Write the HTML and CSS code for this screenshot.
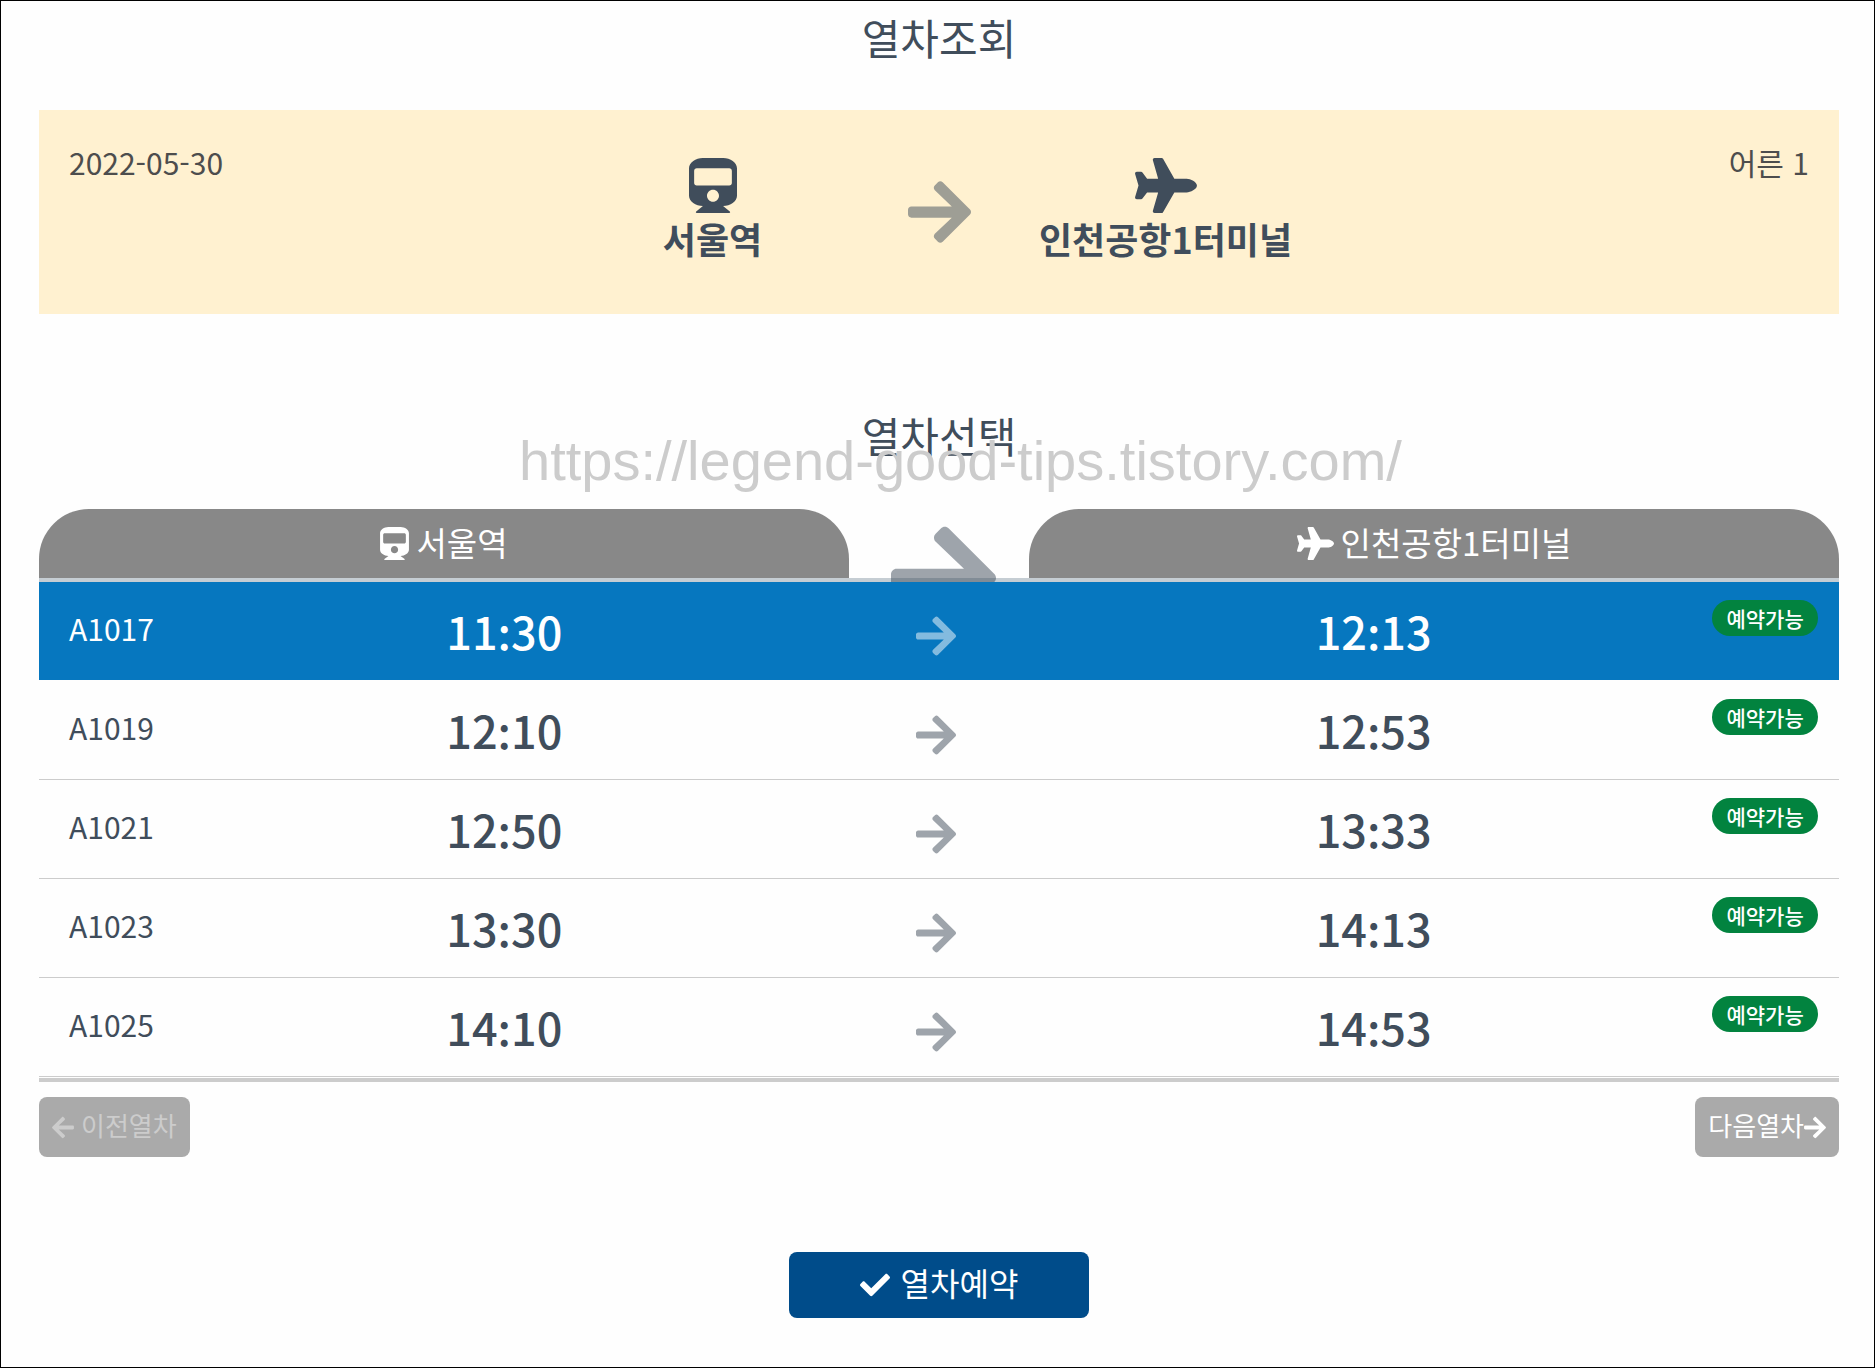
FILE: index.html
```html
<!DOCTYPE html>
<html lang="ko">
<head>
<meta charset="utf-8">
<meta name="viewport" content="width=device-width, initial-scale=1">
<title>열차조회</title>
<link rel="stylesheet" href="styles.css">
</head>
<body>
<svg class="sprite" aria-hidden="true">
  <symbol id="train" viewBox="0 0 448 512"><path d="M448 96v256c0 51.815-61.624 96-130.022 96l62.98 49.721C386.905 502.417 383.562 512 376 512H72c-7.578 0-10.892-9.594-4.957-14.279L130.022 448C61.82 448 0 403.954 0 352V96C0 42.981 64 0 128 0h192c65 0 128 42.981 128 96zm-48 136V120c0-13.255-10.745-24-24-24H72c-13.255 0-24 10.745-24 24v112c0 13.255 10.745 24 24 24h304c13.255 0 24-10.745 24-24zm-176 64c-30.928 0-56 25.072-56 56s25.072 56 56 56 56-25.072 56-56-25.072-56-56-56z"/></symbol>
  <symbol id="plane" viewBox="0 0 576 512"><path d="M480 192H365.71L260.61 8.06A16.014 16.014 0 0 0 246.71 0h-65.5c-10.63 0-18.3 10.17-15.38 20.39L214.86 192H112l-43.2-57.6c-3.02-4.03-7.77-6.4-12.8-6.4H16.01C5.6 128-2.04 137.78.49 147.88L32 256 .49 364.12C-2.04 374.22 5.6 384 16.01 384H56c5.04 0 9.78-2.37 12.8-6.4L112 320h102.86l-49.03 171.6c-2.92 10.22 4.75 20.4 15.38 20.4h65.5c5.74 0 11.04-3.08 13.89-8.06L365.71 320H480c35.35 0 96-28.65 96-64s-60.65-64-96-64z"/></symbol>
  <symbol id="right" viewBox="0 0 448 512"><path d="M190.5 66.9l22.2-22.2c9.4-9.4 24.6-9.4 33.9 0L441 239c9.4 9.4 9.4 24.6 0 33.9L246.6 467.3c-9.4 9.4-24.6 9.4-33.9 0l-22.2-22.2c-9.5-9.5-9.3-25 .4-34.3L311.4 296H24c-13.3 0-24-10.7-24-24v-32c0-13.3 10.7-24 24-24h287.4L190.9 101.2c-9.8-9.3-10-24.8-.4-34.3z"/></symbol>
  <symbol id="left" viewBox="0 0 448 512"><path d="M257.5 445.1l-22.2 22.2c-9.4 9.4-24.6 9.4-33.9 0L7 273c-9.4-9.4-9.4-24.6 0-33.9L201.4 44.7c9.4-9.4 24.6-9.4 33.9 0l22.2 22.2c9.5 9.5 9.3 25-.4 34.3L136.6 216H424c13.3 0 24 10.7 24 24v32c0 13.3-10.7 24-24 24H136.6l120.5 114.8c9.8 9.3 10 24.8.4 34.3z"/></symbol>
  <symbol id="check" viewBox="0 0 512 512"><path d="M173.898 439.404l-166.4-166.4c-9.997-9.997-9.997-26.206 0-36.204l36.203-36.204c9.997-9.998 26.207-9.998 36.204 0L192 312.69 432.095 72.596c9.997-9.997 26.207-9.997 36.204 0l36.203 36.204c9.997 9.997 9.997 26.206 0 36.204l-294.4 294.401c-9.998 9.997-26.207 9.997-36.204-.001z"/></symbol>
</svg>

<main class="page">
  <h1 class="title">열차조회</h1>

  <section class="summary">
    <span class="summary-date">2022-05-30</span>
    <div class="route">
      <div class="station"><svg class="icon icon-train"><use href="#train"/></svg><strong>서울역</strong></div>
      <svg class="icon route-arrow"><use href="#right"/></svg>
      <div class="station"><svg class="icon icon-plane"><use href="#plane"/></svg><strong>인천공항1터미널</strong></div>
    </div>
    <span class="summary-people">어른 1</span>
  </section>

  <section class="select">
    <h2 class="title">열차선택</h2>
    <p class="watermark">https://legend-good-tips.tistory.com/</p>

    <div class="tabs">
      <div class="tab"><svg class="icon icon-train"><use href="#train"/></svg><span class="label">서울역</span></div>
      <div class="tab-gap"><svg class="icon tab-arrow"><use href="#right"/></svg></div>
      <div class="tab"><svg class="icon icon-plane"><use href="#plane"/></svg><span class="label">인천공항1터미널</span></div>
    </div>

    <div class="list">
      <table class="trains">
        <colgroup><col class="col-code"><col class="col-dep"><col class="col-arrow"><col class="col-arr"><col class="col-state"></colgroup>
        <tbody>
          <tr class="selected"><td class="code">A1017</td><td class="time">11:30</td><td class="to"><svg class="icon row-arrow"><use href="#right"/></svg></td><td class="time">12:13</td><td class="state"><span class="badge">예약가능</span></td></tr>
          <tr><td class="code">A1019</td><td class="time">12:10</td><td class="to"><svg class="icon row-arrow"><use href="#right"/></svg></td><td class="time">12:53</td><td class="state"><span class="badge">예약가능</span></td></tr>
          <tr><td class="code">A1021</td><td class="time">12:50</td><td class="to"><svg class="icon row-arrow"><use href="#right"/></svg></td><td class="time">13:33</td><td class="state"><span class="badge">예약가능</span></td></tr>
          <tr><td class="code">A1023</td><td class="time">13:30</td><td class="to"><svg class="icon row-arrow"><use href="#right"/></svg></td><td class="time">14:13</td><td class="state"><span class="badge">예약가능</span></td></tr>
          <tr><td class="code">A1025</td><td class="time">14:10</td><td class="to"><svg class="icon row-arrow"><use href="#right"/></svg></td><td class="time">14:53</td><td class="state"><span class="badge">예약가능</span></td></tr>
        </tbody>
      </table>
    </div>

    <div class="pager">
      <button class="page-btn prev" type="button" disabled><svg class="icon"><use href="#left"/></svg><span class="label">이전열차</span></button>
      <button class="page-btn next" type="button"><span class="label">다음열차</span><svg class="icon"><use href="#right"/></svg></button>
    </div>
  </section>

  <button class="reserve" type="button"><svg class="icon"><use href="#check"/></svg><span class="label">열차예약</span></button>
</main>
</body>
</html>
```

FILE: styles.css
```css
* { box-sizing: border-box; }

body {
  margin: 0;
  min-height: 100vh;
  border: 1px solid #000;
  background: #fefefe;
  color: #404d5b;
  font-family: "Noto Sans CJK KR", sans-serif;
  font-size: 30px;
  font-weight: 400;
}

button { font-family: inherit; border: 0; border-radius: 8px; color: #fff; }

.sprite { position: absolute; width: 0; height: 0; }
.icon { display: block; flex: none; fill: currentColor; }
.label { padding-bottom: 4px; }
button .label { padding-bottom: 6px; }

.page {
  display: flex;
  flex-direction: column;
  padding: 6px 35px 48px 38px;
}

.title {
  margin: 0;
  font-size: 42px;
  font-weight: 400;
  line-height: 60px;
  text-align: center;
}

/* journey summary */
.summary {
  display: flex;
  justify-content: space-between;
  height: 204px;
  margin-top: 43px;
  padding: 30px;
  background: #fff1d0;
}
.summary-date, .summary-people {
  flex: 1;
  line-height: 44px;
  color: #4d4d4d;
}
.summary-people { text-align: right; }

.route { display: flex; }
.station {
  display: flex;
  flex-direction: column;
  align-items: center;
  width: 300px;
  padding-top: 18px;
  font-size: 36px;
  line-height: 50px;
}
.station .icon-train { width: 48px; height: 55px; }
.station .icon-plane { width: 62px; height: 55px; }
.route-arrow {
  width: 63px;
  height: 72px;
  margin: 36px 45px 0;
  opacity: .5;
}

/* train selection */
.select { position: relative; margin-top: 91px; }
.watermark {
  position: absolute;
  top: 24px;
  left: 480px;
  margin: 0;
  color: #ccc;
  font: 56px/64px "Liberation Sans", sans-serif;
}

.tabs {
  display: flex;
  height: 73px;
  margin-top: 44px;
}
.tab {
  display: flex;
  flex: 0 0 45%;
  align-items: center;
  justify-content: center;
  gap: 7px;
  padding-bottom: 4px;
  border-radius: 50px 50px 0 0;
  background: #888;
  color: #fff;
  font-size: 33px;
}
.tab .icon-train { width: 29px; height: 33px; }
.tab .icon-plane { width: 37px; height: 33px; }
.tab-gap {
  position: relative;
  z-index: 1;
  display: flex;
  flex: 1;
  justify-content: center;
  overflow: hidden;
  padding: 9px 0 0 8px;
}
.tab-arrow { width: 105px; height: 120px; opacity: .5; }

.list {
  position: relative;
  margin-top: -4px;
  padding-bottom: 1px;
  border-top: 4px solid #c5cdd3;
  border-bottom: 4px solid #ccc;
}
.trains {
  width: 100%;
  border-collapse: separate;
  border-spacing: 0;
  table-layout: fixed;
}
.trains td {
  height: 99px;
  padding: 0;
  border-bottom: 1px solid #ccc;
}
.trains .selected td { border-bottom-color: #fefefe; }
.trains .selected { background: #0677bf; color: #fff; }
.col-code { width: 7.4%; }
.col-dep { width: 36.9%; }
.col-arrow { width: 11.1%; }
.col-arr { width: 37.5%; }
.col-state { width: 7.1%; }
.trains .code { padding: 0 0 6px 30px; }
.trains .time {
  font-size: 45px;
  font-weight: 500;
  font-feature-settings: "calt" 0, "ccmp" 0, "locl" 0;
  line-height: 60px;
  text-align: center;
}
.trains .to { padding-top: 10px; }
.row-arrow { width: 40px; height: 46px; margin: 0 auto; opacity: .5; }
.trains .state { padding: 18px 21px 0 1px; vertical-align: top; }
.badge {
  display: block;
  border-radius: 18px;
  background: #02833f;
  color: #fff;
  font-size: 21px;
  font-weight: 500;
  line-height: 36px;
  text-align: center;
  white-space: nowrap;
}

/* paging */
.pager { display: flex; justify-content: space-between; margin-top: 15px; }
.page-btn {
  display: flex;
  align-items: center;
  height: 60px;
  padding: 0 13px;
  background: #aaa;
  font-size: 26px;
}
.page-btn .icon { width: 22px; height: 25px; }
.prev { gap: 7px; color: #ccc; }

.reserve {
  display: flex;
  align-items: center;
  justify-content: center;
  align-self: center;
  gap: 11px;
  width: 300px;
  height: 66px;
  margin-top: 95px;
  background: #004c8a;
  font-size: 32px;
}
.reserve .icon { width: 30px; height: 30px; }
```
